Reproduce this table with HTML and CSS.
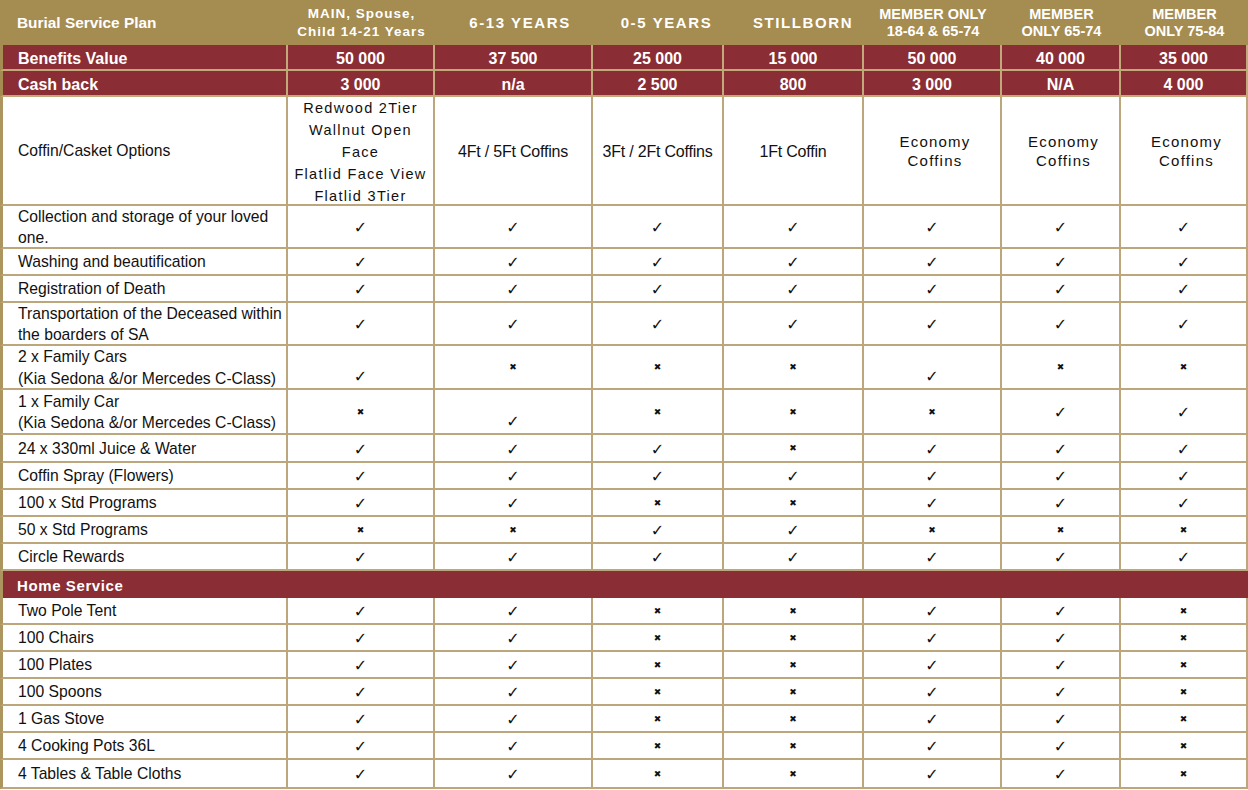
FILE: index.html
```html
<!DOCTYPE html>
<html>
<head>
<meta charset="utf-8">
<link rel="stylesheet" href="styles.css">
</head>
<body>
<div class="t">
  <div class="h first">Burial Service Plan</div>
  <div class="h main">MAIN, Spouse,<br>Child 14-21 Years</div>
  <div class="h yr p6">6-13 YEARS</div>
  <div class="h yr p8">0-5 YEARS</div>
  <div class="h yr p9">STILLBORN</div>
  <div class="h mem">MEMBER ONLY<br>18-64 &amp; 65-74</div>
  <div class="h mem">MEMBER<br>ONLY 65-74</div>
  <div class="h mem">MEMBER<br>ONLY 75-84</div>

  <div class="r lbl">Benefits Value</div>
  <div class="r">50 000</div><div class="r">37 500</div><div class="r">25 000</div><div class="r">15 000</div><div class="r">50 000</div><div class="r">40 000</div><div class="r">35 000</div>

  <div class="r lbl">Cash back</div>
  <div class="r">3 000</div><div class="r">n/a</div><div class="r">2 500</div><div class="r">800</div><div class="r">3 000</div><div class="r">N/A</div><div class="r">4 000</div>

  <div class="c lbl">Coffin/Casket Options</div>
  <div class="c sp">Redwood 2Tier<br>Wallnut Open<br>Face<br>Flatlid Face View<br>Flatlid 3Tier</div>
  <div class="c nar">4Ft / 5Ft Coffins</div>
  <div class="c nar">3Ft / 2Ft Coffins</div>
  <div class="c nar">1Ft Coffin</div>
  <div class="c eco">Economy<br>Coffins</div>
  <div class="c eco">Economy<br>Coffins</div>
  <div class="c eco">Economy<br>Coffins</div>

  <div class="c lbl">Collection and storage of your loved<br>one.</div>
  <div class="c"><span class="ck">✓</span></div><div class="c"><span class="ck">✓</span></div><div class="c"><span class="ck">✓</span></div><div class="c"><span class="ck">✓</span></div><div class="c"><span class="ck">✓</span></div><div class="c"><span class="ck">✓</span></div><div class="c"><span class="ck">✓</span></div>

  <div class="c lbl">Washing and beautification</div>
  <div class="c"><span class="ck">✓</span></div><div class="c"><span class="ck">✓</span></div><div class="c"><span class="ck">✓</span></div><div class="c"><span class="ck">✓</span></div><div class="c"><span class="ck">✓</span></div><div class="c"><span class="ck">✓</span></div><div class="c"><span class="ck">✓</span></div>

  <div class="c lbl">Registration of Death</div>
  <div class="c"><span class="ck">✓</span></div><div class="c"><span class="ck">✓</span></div><div class="c"><span class="ck">✓</span></div><div class="c"><span class="ck">✓</span></div><div class="c"><span class="ck">✓</span></div><div class="c"><span class="ck">✓</span></div><div class="c"><span class="ck">✓</span></div>

  <div class="c lbl">Transportation of the Deceased within<br>the boarders of SA</div>
  <div class="c"><span class="ck">✓</span></div><div class="c"><span class="ck">✓</span></div><div class="c"><span class="ck">✓</span></div><div class="c"><span class="ck">✓</span></div><div class="c"><span class="ck">✓</span></div><div class="c"><span class="ck">✓</span></div><div class="c"><span class="ck">✓</span></div>

  <div class="c lbl">2 x Family Cars<br>(Kia Sedona &amp;/or Mercedes C-Class)</div>
  <div class="c low"><span class="ck">✓</span></div><div class="c"><span class="x">✖</span></div><div class="c"><span class="x">✖</span></div><div class="c"><span class="x">✖</span></div><div class="c low"><span class="ck">✓</span></div><div class="c"><span class="x">✖</span></div><div class="c"><span class="x">✖</span></div>

  <div class="c lbl">1 x Family Car<br>(Kia Sedona &amp;/or Mercedes C-Class)</div>
  <div class="c"><span class="x">✖</span></div><div class="c low"><span class="ck">✓</span></div><div class="c"><span class="x">✖</span></div><div class="c"><span class="x">✖</span></div><div class="c"><span class="x">✖</span></div><div class="c"><span class="ck">✓</span></div><div class="c"><span class="ck">✓</span></div>

  <div class="c lbl">24 x 330ml Juice &amp; Water</div>
  <div class="c"><span class="ck">✓</span></div><div class="c"><span class="ck">✓</span></div><div class="c"><span class="ck">✓</span></div><div class="c"><span class="x">✖</span></div><div class="c"><span class="ck">✓</span></div><div class="c"><span class="ck">✓</span></div><div class="c"><span class="ck">✓</span></div>

  <div class="c lbl">Coffin Spray (Flowers)</div>
  <div class="c"><span class="ck">✓</span></div><div class="c"><span class="ck">✓</span></div><div class="c"><span class="ck">✓</span></div><div class="c"><span class="ck">✓</span></div><div class="c"><span class="ck">✓</span></div><div class="c"><span class="ck">✓</span></div><div class="c"><span class="ck">✓</span></div>

  <div class="c lbl">100 x Std Programs</div>
  <div class="c"><span class="ck">✓</span></div><div class="c"><span class="ck">✓</span></div><div class="c"><span class="x">✖</span></div><div class="c"><span class="x">✖</span></div><div class="c"><span class="ck">✓</span></div><div class="c"><span class="ck">✓</span></div><div class="c"><span class="ck">✓</span></div>

  <div class="c lbl">50 x Std Programs</div>
  <div class="c"><span class="x">✖</span></div><div class="c"><span class="x">✖</span></div><div class="c"><span class="ck">✓</span></div><div class="c"><span class="ck">✓</span></div><div class="c"><span class="x">✖</span></div><div class="c"><span class="x">✖</span></div><div class="c"><span class="x">✖</span></div>

  <div class="c lbl">Circle Rewards</div>
  <div class="c"><span class="ck">✓</span></div><div class="c"><span class="ck">✓</span></div><div class="c"><span class="ck">✓</span></div><div class="c"><span class="ck">✓</span></div><div class="c"><span class="ck">✓</span></div><div class="c"><span class="ck">✓</span></div><div class="c"><span class="ck">✓</span></div>

  <div class="sec">Home Service</div>

  <div class="c lbl">Two Pole Tent</div>
  <div class="c"><span class="ck">✓</span></div><div class="c"><span class="ck">✓</span></div><div class="c"><span class="x">✖</span></div><div class="c"><span class="x">✖</span></div><div class="c"><span class="ck">✓</span></div><div class="c"><span class="ck">✓</span></div><div class="c"><span class="x">✖</span></div>

  <div class="c lbl">100 Chairs</div>
  <div class="c"><span class="ck">✓</span></div><div class="c"><span class="ck">✓</span></div><div class="c"><span class="x">✖</span></div><div class="c"><span class="x">✖</span></div><div class="c"><span class="ck">✓</span></div><div class="c"><span class="ck">✓</span></div><div class="c"><span class="x">✖</span></div>

  <div class="c lbl">100 Plates</div>
  <div class="c"><span class="ck">✓</span></div><div class="c"><span class="ck">✓</span></div><div class="c"><span class="x">✖</span></div><div class="c"><span class="x">✖</span></div><div class="c"><span class="ck">✓</span></div><div class="c"><span class="ck">✓</span></div><div class="c"><span class="x">✖</span></div>

  <div class="c lbl">100 Spoons</div>
  <div class="c"><span class="ck">✓</span></div><div class="c"><span class="ck">✓</span></div><div class="c"><span class="x">✖</span></div><div class="c"><span class="x">✖</span></div><div class="c"><span class="ck">✓</span></div><div class="c"><span class="ck">✓</span></div><div class="c"><span class="x">✖</span></div>

  <div class="c lbl">1 Gas Stove</div>
  <div class="c"><span class="ck">✓</span></div><div class="c"><span class="ck">✓</span></div><div class="c"><span class="x">✖</span></div><div class="c"><span class="x">✖</span></div><div class="c"><span class="ck">✓</span></div><div class="c"><span class="ck">✓</span></div><div class="c"><span class="x">✖</span></div>

  <div class="c lbl">4 Cooking Pots 36L</div>
  <div class="c"><span class="ck">✓</span></div><div class="c"><span class="ck">✓</span></div><div class="c"><span class="x">✖</span></div><div class="c"><span class="x">✖</span></div><div class="c"><span class="ck">✓</span></div><div class="c"><span class="ck">✓</span></div><div class="c"><span class="x">✖</span></div>

  <div class="c lbl">4 Tables &amp; Table Cloths</div>
  <div class="c"><span class="ck">✓</span></div><div class="c"><span class="ck">✓</span></div><div class="c"><span class="x">✖</span></div><div class="c"><span class="x">✖</span></div><div class="c"><span class="ck">✓</span></div><div class="c"><span class="ck">✓</span></div><div class="c"><span class="x">✖</span></div>
</div>
</body>
</html>
```

FILE: styles.css
```css
html, body {
  margin: 0;
  padding: 0;
  background: #ffffff;
}

body {
  font-family: "Liberation Sans", Arial, sans-serif;
  color: #111111;
}

.t {
  width: 1248px;
  display: grid;
  grid-template-columns: 288px 147px 158px 131px 140px 138px 119px 127px;
  grid-template-rows: 45px 26px 26px 109px 43px 27px 27px 43px 44px 45px 28px 27px 27px 27px 27px 27px 27px 27px 27px 27px 27px 27px 29px;
}

.h {
  background: #a58c51;
  color: #ffffff;
  font-weight: bold;
  display: flex;
  align-items: center;
  justify-content: center;
  text-align: center;
}

.h.first {
  justify-content: flex-start;
  padding-left: 17px;
  font-size: 15.4px;
}

.h.main {
  font-size: 13.5px;
  letter-spacing: 1px;
  line-height: 18px;
}

.h.yr {
  font-size: 15px;
  letter-spacing: 1.6px;
}

.h.p6 { padding-left: 12px; }
.h.p8 { padding-left: 16px; }
.h.p9 { padding-left: 18px; }

.h.mem {
  font-size: 14.5px;
  line-height: 17px;
}

.r {
  background: #8a2d34;
  color: #ffffff;
  font-weight: bold;
  font-size: 16px;
  display: flex;
  align-items: center;
  justify-content: center;
  padding-top: 3px;
  border-right: 2px solid #c2a979;
  border-bottom: 2px solid #c2a979;
  box-sizing: border-box;
}

.r.lbl {
  justify-content: flex-start;
  padding-left: 15px;
  border-left: 3px solid #a58c51;
}

.c {
  display: flex;
  align-items: center;
  justify-content: center;
  text-align: center;
  border-right: 2px solid #bca77c;
  border-bottom: 2px solid #bca77c;
  box-sizing: border-box;
  font-size: 15.7px;
  line-height: 21.5px;
}

.c.lbl {
  justify-content: flex-start;
  text-align: left;
  padding-left: 15px;
  padding-top: 1px;
  border-left: 3px solid #ad9560;
  white-space: nowrap;
}

.c.sp {
  font-size: 14.5px;
  letter-spacing: 1.3px;
  line-height: 22px;
  padding-top: 3px;
  white-space: nowrap;
}

.c.nar {
  font-size: 16px;
  letter-spacing: -0.2px;
  padding-top: 2px;
}

.c.eco {
  font-size: 15px;
  letter-spacing: 1.2px;
  line-height: 19px;
  padding-left: 6px;
}

.c.low {
  align-items: flex-end;
  padding-bottom: 3px;
}

.ck {
  font-family: "DejaVu Sans", sans-serif;
  font-size: 16px;
  line-height: 16px;
  margin-top: 3px;
}

.x {
  font-family: "DejaVu Sans", sans-serif;
  font-size: 9px;
  line-height: 10px;
}

.sec {
  grid-column: 1 / 9;
  background: #8a2d34;
  color: #ffffff;
  font-weight: bold;
  font-size: 15px;
  letter-spacing: 0.6px;
  display: flex;
  align-items: center;
  padding-left: 14px;
  padding-top: 1px;
  border-left: 3px solid #ad9560;
  box-sizing: border-box;
}
```
